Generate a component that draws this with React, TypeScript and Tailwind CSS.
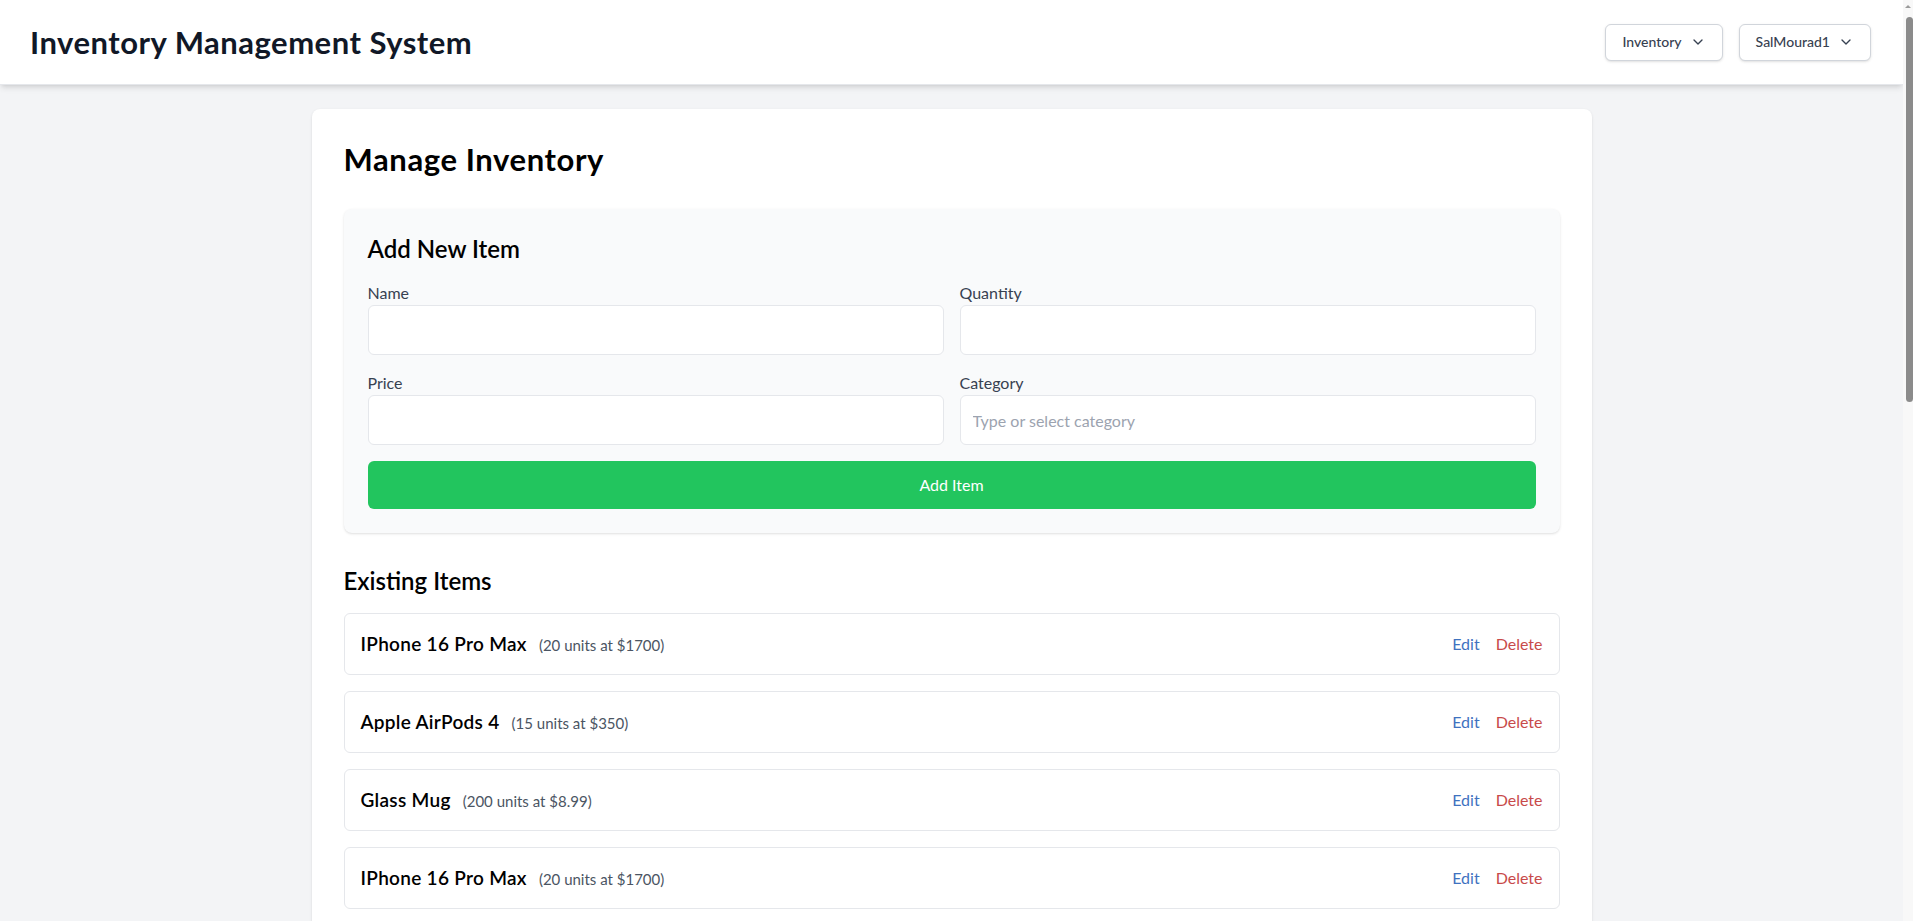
import React from "react";
import { ChevronDown } from "lucide-react";

const base = [
  { name: "IPhone 16 Pro Max", qty: 20, price: "1700" },
  { name: "Apple AirPods 4", qty: 15, price: "350" },
  { name: "Glass Mug", qty: 200, price: "8.99" },
];
const items = Array.from({ length: 18 }, (_, i) => base[i % 3]);

function Field({ label, placeholder }: { label: string; placeholder?: string }) {
  return (
    <div>
      <label className="block text-base leading-6 text-[#374151]">{label}</label>
      <input
        className="w-full h-[50px] px-3 text-base bg-white border border-[#e5e7eb] rounded-md outline-none placeholder:text-[#9ca3af]"
        placeholder={placeholder}
      />
    </div>
  );
}

function HeaderButton({ label }: { label: string }) {
  return (
    <button className="flex items-center gap-2 h-[37px] px-4 bg-white border border-[#d1d5db] rounded-md text-sm font-medium text-[#374151] shadow-sm">
      {label}
      <ChevronDown size={16} strokeWidth={2} className="text-[#374151]" />
    </button>
  );
}

function FakeScrollbar() {
  return (
    <div className="fixed right-0 top-0 h-screen w-[10px] bg-[#f8f8f8] flex flex-col items-center">
      <svg width="8" height="6" viewBox="0 0 8 6" className="mt-[3px]">
        <path d="M1 5 L4 2 L7 5 Z" fill="#9a9a9a" />
      </svg>
      <div className="mt-[8px] ml-[3px] w-[7px] h-[385px] rounded-full bg-[#8b8b8b]" />
    </div>
  );
}

export default function App() {
  return (
    <div
      className="min-h-screen bg-[#f3f4f6] text-[#111827] pr-[10px]"
      style={{ fontFamily: "Lato, 'Noto Sans', sans-serif" }}
    >
      <header className="bg-white shadow-md border-b border-[#e5e7eb] h-[85px] flex items-center justify-between pl-[30px] pr-8">
        <h1 className="text-[31px] leading-9 tracking-[0.5px] font-bold text-[#111827]">
          Inventory Management System
        </h1>
        <div className="flex items-center gap-4">
          <HeaderButton label="Inventory" />
          <HeaderButton label="SalMourad1" />
        </div>
      </header>

      <main className="py-6">
        <div className="max-w-7xl mx-auto bg-white rounded-lg shadow-sm p-8">
          <h2 className="text-[31px] leading-9 tracking-[0.6px] font-bold text-black mb-8">
            Manage Inventory
          </h2>

          <section className="bg-[#f9fafb] rounded-lg shadow p-6 mb-8">
            <h3 className="text-2xl font-semibold text-black mb-4">Add New Item</h3>
            <div className="grid grid-cols-2 gap-4">
              <Field label="Name" />
              <Field label="Quantity" />
              <Field label="Price" />
              <Field label="Category" placeholder="Type or select category" />
            </div>
            <button className="mt-4 w-full h-12 rounded-md bg-[#22c55e] text-white text-base">
              Add Item
            </button>
          </section>

          <h3 className="text-2xl font-semibold text-black mb-4">Existing Items</h3>
          <ul className="flex flex-col gap-4">
            {items.map((it, i) => (
              <li
                key={i}
                className="flex items-center justify-between border border-[#e5e7eb] rounded-md p-4 bg-white"
              >
                <div className="flex items-baseline">
                  <span className="text-[19px] tracking-[0.3px] font-semibold text-black leading-7">
                    {it.name}
                  </span>
                  <span className="ml-3 text-[15px] text-[#4b5563]">
                    ({it.qty} units at ${it.price})
                  </span>
                </div>
                <div className="flex items-center gap-4 text-base">
                  <button className="text-[#3f72bf]">Edit</button>
                  <button className="text-[#c84a4a]">Delete</button>
                </div>
              </li>
            ))}
          </ul>
        </div>
      </main>
      <FakeScrollbar />
    </div>
  );
}
